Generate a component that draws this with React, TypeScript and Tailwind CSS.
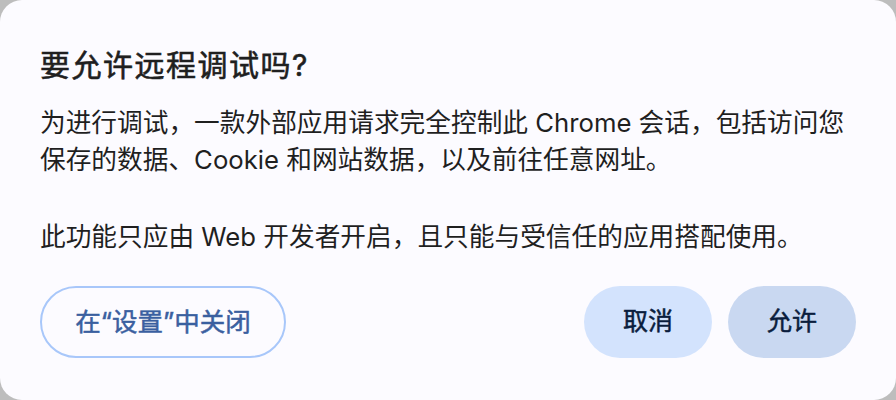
import React from "react";

const font = {
  fontFamily: 'Inter, "Noto Sans CJK SC", sans-serif',
};

export default function App() {
  return (
    <div className="h-[400px] w-[896px] bg-[#bdbdbd]" style={font}>
      <div className="flex h-full w-full flex-col rounded-[22px] bg-[#fcfbff] px-10 pt-[45px] text-[#1f1f1f]">
        <h1 className="text-[30px] leading-[40px] tracking-[1.5px] [-webkit-text-stroke:0.6px_#1f1f1f]">
          要允许远程调试吗?
        </h1>
        <p className="mt-[19px] text-[25.7px] leading-[37px]">
          为进行调试，一款外部应用请求完全控制此 Chrome 会话，包括访问您
          <br />
          保存的数据、Cookie 和网站数据，以及前往任意网址。
        </p>
        <p className="mt-[40px] text-[25.7px] leading-[37px]">
          此功能只应由 Web 开发者开启，且只能与受信任的应用搭配使用。
        </p>
        <div className="mt-[31px] flex items-center">
          <button className="flex h-[72px] w-[246px] items-center justify-center rounded-full border-2 border-[#a8c7fa] text-[25.5px] text-[#3a5f9f] [-webkit-text-stroke:0.5px_#3a5f9f]">
            在“设置”中关闭
          </button>
          <div className="ml-auto flex gap-4">
            <button className="flex h-[72px] w-[128px] items-center justify-center rounded-full bg-[#d3e3fd] text-[25px] text-[#0a1d3d] [-webkit-text-stroke:0.5px_#0a1d3d]">
              取消
            </button>
            <button className="flex h-[72px] w-[128px] items-center justify-center rounded-full bg-[#c9d8f1] text-[25px] text-[#0a1d3d] [-webkit-text-stroke:0.5px_#0a1d3d]">
              允许
            </button>
          </div>
        </div>
      </div>
    </div>
  );
}
